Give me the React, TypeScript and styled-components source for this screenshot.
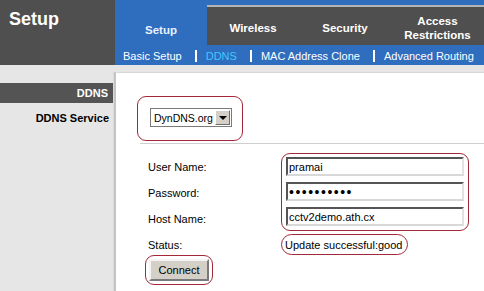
import React from "react";
import styled, { createGlobalStyle } from "styled-components";

const GlobalStyle = createGlobalStyle`
  html, body {
    margin: 0;
    padding: 0;
    background: #e6e6e6;
    font-family: "Liberation Sans", Arial, sans-serif;
  }
`;

const Page = styled.div`
  width: 484px;
  height: 291px;
  overflow: hidden;
  display: flex;
  flex-direction: column;
  background: #e6e6e6;
`;

const Header = styled.header`
  display: flex;
  height: 65px;
`;

const Title = styled.div`
  width: 115px;
  background: #4f4f4f;
  color: #fff;
  font-size: 18px;
  font-weight: bold;
  padding: 9px 0 0 9px;
  box-sizing: border-box;
`;

const Nav = styled.nav`
  flex: 1;
  display: flex;
  flex-direction: column;
  background: #2f6dbf;
`;

const Tabs = styled.div`
  display: flex;
  height: 45px;
`;

const Tab = styled.div<{ $active?: boolean; $grow?: boolean }>`
  width: ${(p) => (p.$grow ? "auto" : "92px")};
  flex: ${(p) => (p.$grow ? 1 : "none")};
  margin-top: ${(p) => (p.$active ? "0" : "5px")};
  background: ${(p) => (p.$active ? "#2f6dbf" : "#4f4f4f")};
  border-top: ${(p) => (p.$active ? "none" : "2px solid #b4b4b4")};
  color: ${(p) => (p.$active ? "#e8f2ff" : "#fff")};
  font-size: 11.5px;
  font-weight: bold;
  line-height: 14px;
  text-align: center;
  display: flex;
  align-items: center;
  justify-content: center;
  padding-top: ${(p) => (p.$active ? "14px" : "4px")};
  box-sizing: border-box;
`;

const SubNav = styled.div`
  height: 20px;
  display: flex;
  align-items: center;
  padding: 2px 0 0 8px;
  font-size: 11px;
  color: #fff;
  white-space: nowrap;
  box-sizing: border-box;
`;

const SubLink = styled.span<{ $active?: boolean }>`
  flex: none;
  color: ${(p) => (p.$active ? "#3fc6ff" : "#fff")};
`;

const Divider = styled.span`
  flex: none;
  display: inline-block;
  width: 2px;
  height: 12px;
  background: #fff;
  margin: 0 9px 0 13px;
`;

const Body = styled.div`
  flex: 1;
  display: flex;
`;

const Sidebar = styled.aside`
  width: 114px;
  padding-top: 18px;
`;

const SideHead = styled.div`
  height: 20px;
  background: #545454;
  color: #fff;
  font-size: 11px;
  font-weight: bold;
  text-align: right;
  line-height: 20px;
  padding-right: 5px;
  margin-right: 1px;
`;

const SideLabel = styled.div`
  font-size: 11px;
  font-weight: bold;
  color: #000;
  text-align: right;
  padding: 9px 5px 0 0;
`;

const Main = styled.main`
  flex: 1;
  padding-top: 7px;
  display: flex;
`;

const Panel = styled.div`
  flex: 1;
  background: #fff;
  border-left: 2px solid #c4c4c4;
  box-shadow: -1px 0 0 #dadada;
  border-top: 1px solid #d8d8d8;
  font-size: 11px;
  color: #000;
`;

const Mark = styled.div`
  display: inline-flex;
  border: 1.5px solid #a3283a;
  border-radius: 9px;
  box-sizing: border-box;
`;

const ServiceMark = styled(Mark)`
  margin: 23px 0 0 21px;
  padding: 11px 10px 13px 12px;
`;

const Select = styled.div`
  display: flex;
  align-items: center;
  width: 82px;
  height: 19px;
  border: 1px solid #7a7a7a;
  box-sizing: border-box;
  background: #fff;
  padding: 1px;
`;

const SelectText = styled.span`
  flex: 1;
  padding-left: 2px;
  font-size: 10.5px;
`;

const ArrowButton = styled.span`
  width: 15px;
  height: 15px;
  box-sizing: border-box;
  background: #d4d0c8;
  border: 1px solid;
  border-color: #fff #6e6e6e #6e6e6e #fff;
  display: flex;
  align-items: center;
  justify-content: center;

  &::after {
    content: "";
    border-left: 4px solid transparent;
    border-right: 4px solid transparent;
    border-top: 4px solid #000;
  }
`;

const Rule = styled.div`
  height: 1px;
  background: #cfcfcf;
  margin: 2px 0 0 24px;
`;

const Form = styled.div`
  display: grid;
  grid-template-columns: 133px 188px;
  grid-template-rows: 26px 26px 26px 24px;
  margin: 9px 0 0 32px;
`;

const Label = styled.div`
  display: flex;
  align-items: center;
  padding-top: 2px;
  font-size: 11px;
`;

const StatusLabel = styled(Label)`
  align-items: flex-end;
  padding-bottom: 4px;
`;

const FieldsMark = styled(Mark)`
  grid-column: 2;
  grid-row: 1 / 4;
  flex-direction: column;
  gap: 6px;
  padding: 3px 3px 4px 4px;
  height: 78px;
`;

const Input = styled.input`
  width: 178px;
  height: 19px;
  box-sizing: border-box;
  border: 2px solid;
  border-color: #555 #e2e2e2 #d8d8d8 #555;
  padding: 0 1px;
  font-family: "Liberation Sans", Arial, sans-serif;
  font-size: 11px;
  color: #000;
  background: #fff;
  outline: none;

  &[type="password"] {
    font-size: 14px;
    letter-spacing: 1.5px;
  }
`;

const StatusMark = styled(Mark)`
  grid-column: 2;
  grid-row: 4;
  align-self: end;
  justify-self: start;
  height: 21px;
  align-items: center;
  padding: 0 5px 0 3px;
  border-radius: 11px;
`;

const ButtonMark = styled(Mark)`
  margin-left: 29px;
  padding: 3px;
`;

const Button = styled.button`
  width: 60px;
  height: 22px;
  background: #d4d0c8;
  border: 2px solid;
  border-color: #f4f4f4 #7a7a7a #7a7a7a #f4f4f4;
  font-family: "Liberation Sans", Arial, sans-serif;
  font-size: 11px;
  color: #000;
  padding: 0;
`;

const subLinks = ["Basic Setup", "DDNS", "MAC Address Clone", "Advanced Routing"];

export default function App() {
  return (
    <>
      <GlobalStyle />
      <Page>
        <Header>
          <Title>Setup</Title>
          <Nav>
            <Tabs>
              <Tab $active>Setup</Tab>
              <Tab>Wireless</Tab>
              <Tab>Security</Tab>
              <Tab $grow>
                Access
                <br />
                Restrictions
              </Tab>
            </Tabs>
            <SubNav>
              {subLinks.map((l, i) => (
                <React.Fragment key={l}>
                  {i > 0 && <Divider />}
                  <SubLink $active={l === "DDNS"}>{l}</SubLink>
                </React.Fragment>
              ))}
            </SubNav>
          </Nav>
        </Header>
        <Body>
          <Sidebar>
            <SideHead>DDNS</SideHead>
            <SideLabel>DDNS Service</SideLabel>
          </Sidebar>
          <Main>
            <Panel>
              <ServiceMark>
                <Select>
                  <SelectText>DynDNS.org</SelectText>
                  <ArrowButton />
                </Select>
              </ServiceMark>
              <Rule />
              <Form>
                <Label>User Name:</Label>
                <FieldsMark>
                  <Input defaultValue="pramai" readOnly />
                  <Input type="password" defaultValue="abcdefghij" readOnly />
                  <Input defaultValue="cctv2demo.ath.cx" readOnly />
                </FieldsMark>
                <Label>Password:</Label>
                <Label>Host Name:</Label>
                <StatusLabel>Status:</StatusLabel>
                <StatusMark>Update successful:good</StatusMark>
              </Form>
              <ButtonMark>
                <Button>Connect</Button>
              </ButtonMark>
            </Panel>
          </Main>
        </Body>
      </Page>
    </>
  );
}
